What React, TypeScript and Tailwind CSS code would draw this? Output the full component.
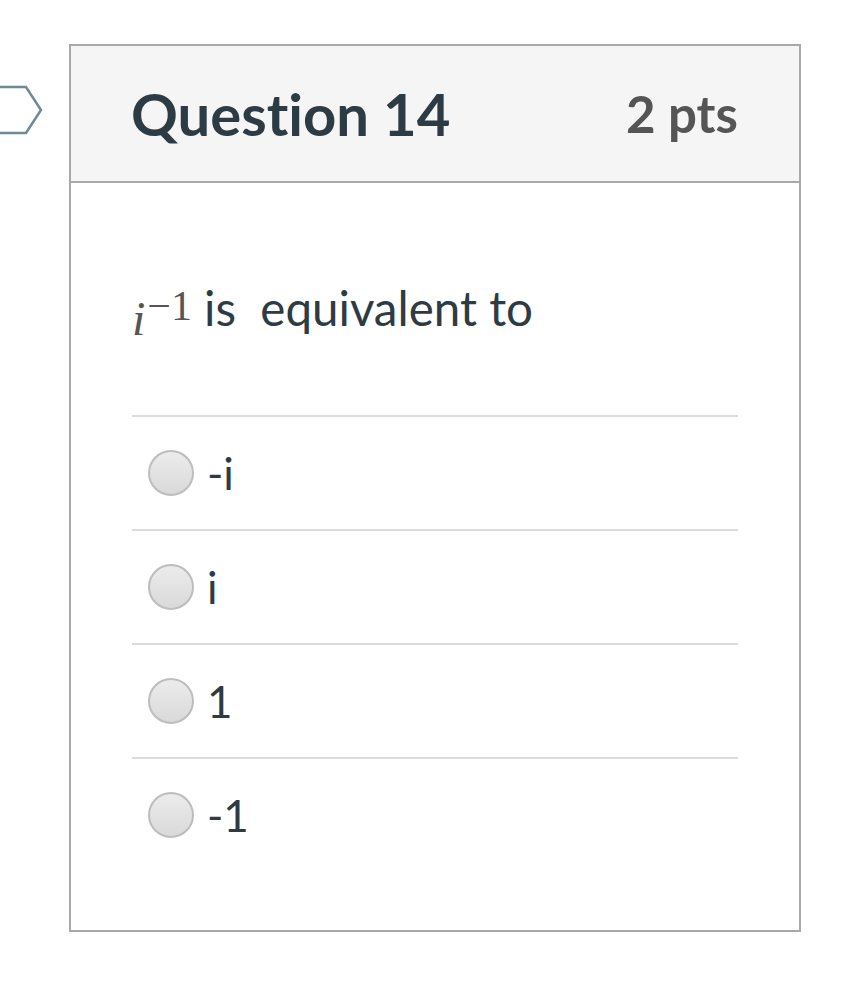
import React from "react";

const answers = ["-i", "i", "1", "-1"];

function Radio() {
    return (
        <span className="block h-[46px] w-[46px] shrink-0 rounded-full border-2 border-[#bdbdbd] bg-gradient-to-b from-[#ececec] to-[#d9d9d9]" />
    );
}

export default function App() {
    return (
        <div className="relative min-h-[1002px] w-[864px] bg-white pt-[44px] font-['Lato','Noto_Sans',sans-serif] text-[#2d3b45] [font-variant-ligatures:none]">
            {/* bookmark tag on the left edge */}
            <svg className="absolute left-0 top-[84px]" width="46" height="52" viewBox="0 0 46 52" fill="none">
                <path d="M-4 3 H26 L41 26 L26 49 H-4" stroke="#6e8a99" strokeWidth="2.5" strokeLinejoin="miter" />
            </svg>

            <div className="ml-[69px] w-[732px] border-2 border-[#a9a9a9]">
                {/* Header */}
                <div className="flex h-[137px] items-center justify-between border-b-2 border-[#a9a9a9] bg-[#f5f5f5] pl-[60px] pr-[61px]">
                    <h2 className="text-[58px] font-bold leading-none">Question 14</h2>
                    <span className="text-[51px] font-bold leading-none text-[#555]">2 pts</span>
                </div>

                {/* Body */}
                <div className="px-[61px] pb-[59px] pt-[95px]">
                    <p className="mb-[75px] flex items-baseline text-[47.5px] leading-[60px]">
                        <span className="mr-[12px] whitespace-nowrap font-['Liberation_Serif',serif] text-[#555]">
                            <span className="relative top-[9px] text-[48px] italic">i</span>
                            <sup className="relative -top-[6px] ml-[2px] text-[42px]">−1</sup>
                        </span>
                        <span>is&nbsp; equivalent to</span>
                    </p>

                    <div>
                        {answers.map((a) => (
                            <label key={a} className="flex h-[114px] items-center gap-[13px] border-t-2 border-[#dcdcdc] pl-[16px]">
                                <Radio />
                                <span className="text-[44px] leading-none">{a}</span>
                            </label>
                        ))}
                    </div>
                </div>
            </div>
        </div>
    );
}
